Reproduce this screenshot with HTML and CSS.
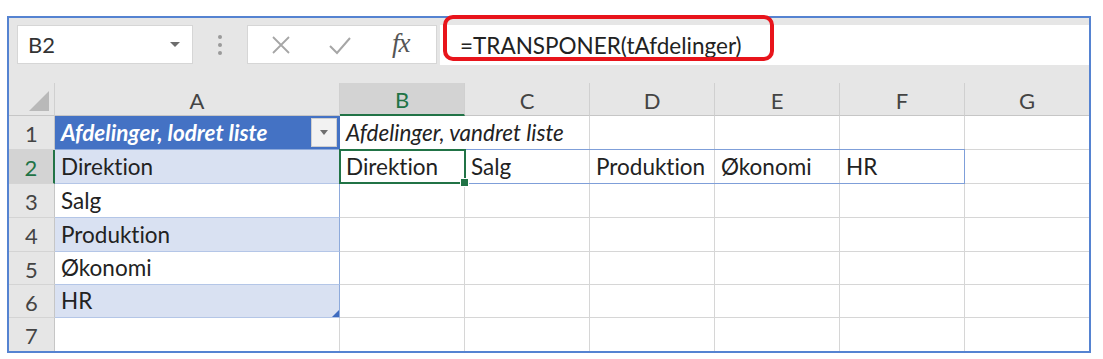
FILE: index.html
```html
<!DOCTYPE html>
<html lang="da">
<head>
<meta charset="utf-8">
<title>TRANSPONER</title>
<link rel="stylesheet" href="styles.css">
</head>
<body>
<div class="frame">
  <div class="fbar">
    <div class="namebox">
      <span class="name">B2</span>
      <span class="dd"></span>
    </div>
    <div class="grip"><i></i><i></i><i></i></div>
    <div class="fxbox">
      <svg class="ic" width="22" height="22" viewBox="0 0 22 22"><path d="M3 3 L19 19 M19 3 L3 19" stroke="#a6a6a6" stroke-width="1.8" fill="none"/></svg>
      <svg class="ic" width="24" height="22" viewBox="0 0 24 22"><path d="M2 12 L9 19 L22 4" stroke="#a6a6a6" stroke-width="2" fill="none"/></svg>
      <span class="fx">fx</span>
    </div>
    <div class="formula">
      <span class="ftext">=TRANSPONER(tAfdelinger)</span>
      <span class="mark"></span>
    </div>
  </div>
  <div class="sheet">
    <div class="hc corner"><span class="tri"></span></div>
    <div class="hc">A</div>
    <div class="hc sel">B</div>
    <div class="hc">C</div>
    <div class="hc">D</div>
    <div class="hc">E</div>
    <div class="hc">F</div>
    <div class="hc last">G</div>

    <div class="rh">1</div>
    <div class="c thead">Afdelinger, lodret liste<span class="filt"><span class="arr"></span></span></div>
    <div class="c b1">Afdelinger, vandret liste</div>
    <div class="c"></div><div class="c"></div><div class="c"></div><div class="c last"></div>

    <div class="rh rsel">2</div>
    <div class="c tb band">Direktion</div>
    <div class="c b2">Direktion<span class="spill"></span><span class="active"></span></div><div class="c">Salg</div><div class="c">Produktion</div><div class="c">Økonomi</div><div class="c">HR</div><div class="c last"></div>

    <div class="rh">3</div>
    <div class="c tb">Salg</div>
    <div class="c"></div><div class="c"></div><div class="c"></div><div class="c"></div><div class="c"></div><div class="c last"></div>

    <div class="rh">4</div>
    <div class="c tb band">Produktion</div>
    <div class="c"></div><div class="c"></div><div class="c"></div><div class="c"></div><div class="c"></div><div class="c last"></div>

    <div class="rh">5</div>
    <div class="c tb">Økonomi</div>
    <div class="c"></div><div class="c"></div><div class="c"></div><div class="c"></div><div class="c"></div><div class="c last"></div>

    <div class="rh">6</div>
    <div class="c tb band tend">HR</div>
    <div class="c"></div><div class="c"></div><div class="c"></div><div class="c"></div><div class="c"></div><div class="c last"></div>

    <div class="rh bot">7</div>
    <div class="c bot"></div>
    <div class="c bot"></div><div class="c bot"></div><div class="c bot"></div><div class="c bot"></div><div class="c bot"></div><div class="c bot last"></div>
  </div>
</div>
</body>
</html>
```
FILE: styles.css
```css
* { box-sizing: border-box; }
html, body { margin: 0; padding: 0; background: #fff; }
body {
  font-family: Lato, "Open Sans", sans-serif;
  color: #222;
  font-variant-ligatures: none;
}

.frame {
  margin: 16px 0 0 7px;
  width: 1084px;
  height: 337px;
  border: 2px solid #5583d1;
  background: #fff;
  display: flex;
  flex-direction: column;
}

.fbar {
  height: 65px;
  background: #e6e6e6;
  display: flex;
  align-items: flex-start;
  padding: 7px 0 0 8px;
}
.namebox {
  width: 176px;
  height: 39px;
  background: #fff;
  border: 1px solid #d6d6d6;
  display: flex;
  align-items: center;
  padding: 0 10px 0 10px;
}
.name { font-size: 22px; color: #333; flex: 1; }
.dd {
  width: 0; height: 0;
  border-left: 5px solid transparent;
  border-right: 5px solid transparent;
  border-top: 5px solid #6d6d6d;
  margin-right: 2px;
}
.grip {
  width: 54px;
  height: 39px;
  display: flex;
  flex-direction: column;
  align-items: center;
  justify-content: center;
  gap: 4px;
}
.grip i { width: 4px; height: 4px; border-radius: 2px; background: #9a9a9a; display: block; }
.fxbox {
  width: 190px;
  height: 39px;
  background: #fff;
  border: 1px solid #d6d6d6;
  display: flex;
  align-items: center;
  padding-left: 22px;
}
.fxbox .ic { margin-right: 36px; }
.fxbox .ic + .ic { margin-right: 40px; }
.fx {
  font-family: "Liberation Serif", serif;
  font-style: italic;
  font-size: 27px;
  color: #555;
  letter-spacing: -1px;
  margin-top: -2px;
}
.formula {
  position: relative;
  flex: 1;
  height: 40px;
  margin-left: 3px;
  background: #fff;
  display: flex;
  align-items: center;
  padding-left: 20px;
}
.ftext { font-size: 22.5px; color: #222; }
.mark {
  position: absolute;
  left: 3px;
  top: -10px;
  width: 331px;
  height: 46px;
  border: 4px solid #e8141b;
  border-radius: 10px;
}

.sheet {
  flex: 1;
  display: grid;
  grid-template-columns: 46px 285px repeat(5, 125px) 124px;
  grid-template-rows: 33px 34px 34px 34px 34px 33px 33px 33px;
}
.hc {
  background: #e6e6e6;
  border-right: 1px solid #d0d0d0;
  border-bottom: 1px solid #c6c6c6;
  display: flex;
  align-items: center;
  justify-content: center;
  font-size: 22px;
  color: #444;
  padding-top: 2px;
}
.hc.last { border-right: none; }
.hc.sel {
  background: #d3d3d3;
  color: #217346;
  border-bottom: 2px solid #217346;
}
.corner { position: relative; }
.tri {
  position: absolute;
  right: 5px;
  bottom: 4px;
  width: 0; height: 0;
  border-left: 20px solid transparent;
  border-bottom: 20px solid #b9b9b9;
}
.rh {
  background: #e6e6e6;
  border-right: 1px solid #c6c6c6;
  border-bottom: 1px solid #d4d4d4;
  display: flex;
  align-items: center;
  justify-content: center;
  font-size: 22px;
  color: #444;
  padding-top: 2px;
}
.rh.rsel {
  background: #d3d3d3;
  color: #217346;
  border-right: 2px solid #217346;
}
.rh.bot { border-bottom: none; }

.c {
  border-right: 1px solid #d6d6d6;
  border-bottom: 1px solid #d6d6d6;
  display: flex;
  align-items: flex-end;
  padding: 0 0 3px 6px;
  font-size: 22.5px;
  color: #222;
  white-space: nowrap;
}
.c.last { border-right: none; }
.c.bot { border-bottom: none; }

.thead {
  background: #4472c4;
  color: #fff;
  font-weight: bold;
  font-style: italic;
  border-right: 1px solid #4472c4;
  border-bottom: 1px solid #8eaadb;
  align-items: center;
  padding: 0 2px 0 6px;
}
.filt {
  margin-left: auto;
  width: 26px;
  height: 29px;
  background: #f2f2f2;
  border: 1px solid #cfcfcf;
  display: flex;
  align-items: center;
  justify-content: center;
}
.arr {
  width: 0; height: 0;
  border-left: 4px solid transparent;
  border-right: 4px solid transparent;
  border-top: 5px solid #6f6f6f;
}
.b1 {
  grid-column: span 2;
  font-style: italic;
}
.tb {
  border-right: 1px solid #8eaadb;
  border-bottom: 1px solid #b4c6e7;
}
.band { background: #d9e1f2; }
.tend { position: relative; }
.tend::after {
  content: "";
  position: absolute;
  right: 0;
  bottom: 0;
  width: 0; height: 0;
  border-left: 7px solid transparent;
  border-bottom: 7px solid #3e6cc0;
}

.b2 { position: relative; }
.spill {
  position: absolute;
  left: -1px;
  top: -1px;
  width: 626px;
  height: 35px;
  border: 1px solid #7f9fd9;
}
.active {
  position: absolute;
  left: -1px;
  top: -1px;
  width: 127px;
  height: 35px;
  border: 2px solid #217346;
}
.active::after {
  content: "";
  position: absolute;
  right: -5px;
  bottom: -5px;
  width: 7px;
  height: 7px;
  background: #217346;
  border: 1px solid #fff;
}
```
